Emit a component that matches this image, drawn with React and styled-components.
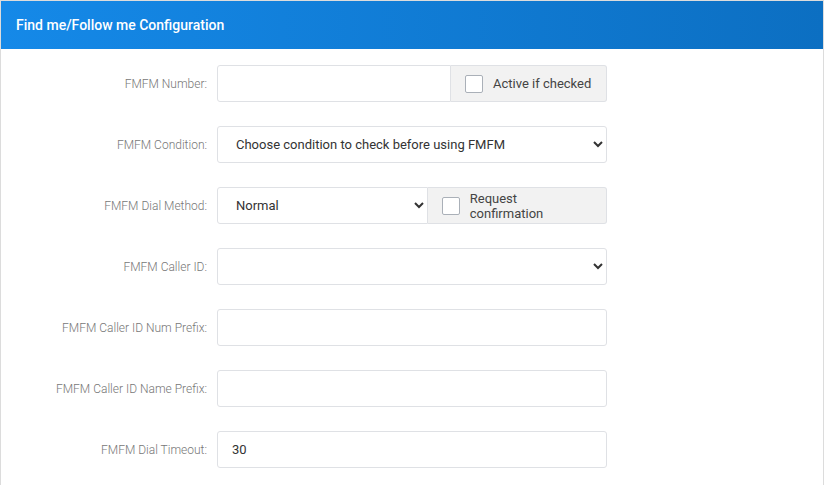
import React from "react";
import styled, { createGlobalStyle } from "styled-components";

const G = createGlobalStyle`
  body { margin:0; font-family: Roboto, "Liberation Sans", sans-serif; background:#fff; }
`;
const Panel = styled.div`
  width:824px; height:485px; box-sizing:border-box; border:1px solid #dcdcdc; border-bottom:none; overflow:hidden;
`;
const Header = styled.div`
  height:49px; background:linear-gradient(90deg,#1589e8,#0c6fc2); color:#fff; font-size:14px; font-weight:500;
  display:flex; align-items:center; padding-left:16px; margin:-1px -1px 0; 
`;
const Body = styled.div`
  padding-top:16px; display:flex; flex-direction:column; gap:24px;
`;
const Row = styled.div`display:flex; align-items:center; height:37px;`;
const Label = styled.label`
  width:206px; text-align:right; padding-right:10px; font-size:12px; color:#777; font-weight:300;
`;
const Group = styled.div`display:flex; width:390px; height:37px;`;
const Input = styled.input`
  flex:1; min-width:0; box-sizing:border-box; height:37px; border:1px solid #dfe1e5; border-radius:3px;
  padding:0 14px; font: 13px Roboto, sans-serif; color:#333;
`;
const Select = styled.select`
  ${p => p.$w ? `width:${p.$w}px; flex:none;` : "flex:1;"}
  box-sizing:border-box; height:37px; border:1px solid #dfe1e5; border-radius:3px; background:#fff;
  padding:0 14px; font: 13px Roboto, sans-serif; color:#333;
`;
const Addon = styled.div`
  display:flex; align-items:center; gap:10px; padding:0 14px; background:#f2f2f2; border:1px solid #dfe1e5;
  border-left:none; border-radius:0 3px 3px 0; font-size:13px; color:#444; box-sizing:border-box; ${p=>`width:${p.$w}px;`}
`;
const Box = styled.span`width:16px; height:16px; border:1px solid #aab0b8; border-radius:2px; background:#fff;`;

export default function App(){
  return <><G/><Panel>
    <Header>Find me/Follow me Configuration</Header>
    <Body>
      <Row><Label>FMFM Number:</Label><Group><Input style={{borderRadius:"3px 0 0 3px"}}/><Addon $w={156}><Box/>Active if checked</Addon></Group></Row>
      <Row><Label>FMFM Condition:</Label><Group><Select><option>Choose condition to check before using FMFM</option></Select></Group></Row>
      <Row><Label>FMFM Dial Method:</Label><Group><Select $w={211} style={{borderRadius:"3px 0 0 3px"}}><option>Normal</option></Select><Addon $w={179}><Box/>Request confirmation</Addon></Group></Row>
      <Row><Label>FMFM Caller ID:</Label><Group><Select><option></option></Select></Group></Row>
      <Row><Label>FMFM Caller ID Num Prefix:</Label><Group><Input/></Group></Row>
      <Row><Label>FMFM Caller ID Name Prefix:</Label><Group><Input/></Group></Row>
      <Row><Label>FMFM Dial Timeout:</Label><Group><Input defaultValue="30"/></Group></Row>
    </Body>
  </Panel></>;
}
